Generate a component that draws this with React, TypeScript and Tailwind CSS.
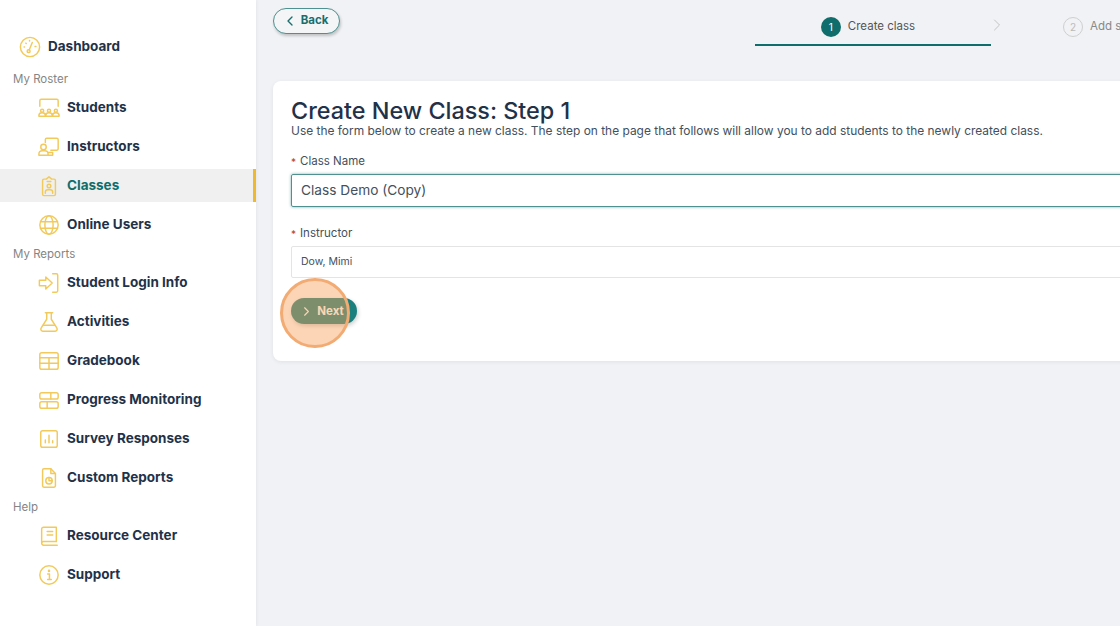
import React from "react";
import { ChevronLeft, ChevronRight } from "lucide-react";

const iconProps = {
  fill: "none",
  stroke: "#f2ca5c",
  strokeWidth: 1.6,
  strokeLinecap: "round" as const,
  strokeLinejoin: "round" as const,
  viewBox: "0 0 24 24",
  className: "w-[22px] h-[22px] shrink-0",
};

function DashboardIcon() {
  return (
    <svg {...iconProps}>
      <circle cx="12" cy="12" r="10.500" />
      <circle cx="10.500" cy="16.500" r="1.600" />
      <path d="M11.200 15l3.300-8M5.500 12h.5M7.500 7.800l.4.4M11.500 5v.5M17.500 11.500h1" />
    </svg>
  );
}
function StudentsIcon() {
  return (
    <svg {...iconProps}>
      <path d="M2 10V4a1.500 1.500 0 0 1 1.500-1.500h17A1.500 1.500 0 0 1 22 4v6" />
      <circle cx="4.500" cy="15" r="1.700" />
      <circle cx="12" cy="15" r="1.700" />
      <circle cx="19.500" cy="15" r="1.700" />
      <path d="M1 21v-1a3 2.500 0 0 1 7 0v1zM8.500 21v-1a3 2.500 0 0 1 7 0v1zM16 21v-1a3 2.500 0 0 1 7 0v1z" />
    </svg>
  );
}
function InstructorsIcon() {
  return (
    <svg {...iconProps}>
      <path d="M8 7V4a1.500 1.500 0 0 1 1.500-1.500h11A1.500 1.500 0 0 1 22 4v10a1.500 1.500 0 0 1-1.500 1.500H14" />
      <circle cx="6" cy="12" r="3" />
      <path d="M1 21v-1.500A3.500 3.500 0 0 1 4.500 16h3a3.500 3.500 0 0 1 3.500 3.500V21z" />
      <path d="M11 18h5v3h-5" />
    </svg>
  );
}
function ClassesIcon() {
  return (
    <svg {...iconProps}>
      <path d="M9 4.500L12 2l3 2.500h2.500A1.500 1.500 0 0 1 19 6v15a1.500 1.500 0 0 1-1.500 1.500h-11A1.500 1.500 0 0 1 5 21V6a1.500 1.500 0 0 1 1.500-1.500z" />
      <path d="M10 7h4" />
      <circle cx="12" cy="12" r="2" />
      <path d="M8 20v-1.500A2.500 2.500 0 0 1 10.500 16h3a2.500 2.500 0 0 1 2.500 2.500V20" />
    </svg>
  );
}
function GlobeIcon() {
  return (
    <svg {...iconProps}>
      <circle cx="12" cy="12" r="10" />
      <ellipse cx="12" cy="12" rx="4.500" ry="10" />
      <path d="M2.800 8.500h18.400M2.800 15.500h18.400" />
    </svg>
  );
}
function LoginIcon() {
  return (
    <svg {...iconProps}>
      <path d="M16 2h4a1.500 1.500 0 0 1 1.500 1.500v17A1.500 1.500 0 0 1 20 22h-4" />
      <path d="M1.500 9h7V5.500L15.500 12l-7 6.500V15h-7z" />
    </svg>
  );
}
function FlaskIcon() {
  return (
    <svg {...iconProps}>
      <path d="M8 2h8M9.500 2v7L3.500 18.500A2.200 2.200 0 0 0 5.500 22h13a2.200 2.200 0 0 0 2-3.500L14.500 9V2" />
      <path d="M6 15.500h12" />
    </svg>
  );
}
function TableIcon() {
  return (
    <svg {...iconProps}>
      <rect x="2" y="3" width="20" height="18" rx="2" />
      <path d="M2 8.500h20M2 14.500h20M12 8.500V21" />
    </svg>
  );
}
function ProgressIcon() {
  return (
    <svg {...iconProps}>
      <rect x="2" y="4" width="20" height="7" rx="2" />
      <rect x="2" y="14" width="20" height="7" rx="2" />
      <path d="M14 4v7M10 14v7" />
    </svg>
  );
}
function SurveyIcon() {
  return (
    <svg {...iconProps}>
      <rect x="3" y="3" width="18" height="18" rx="2" />
      <path d="M8 16v-3M12 16V8M16 16v-2" />
    </svg>
  );
}
function ReportIcon() {
  return (
    <svg {...iconProps}>
      <path d="M6.500 2H14l5 5v13.500a1.500 1.500 0 0 1-1.500 1.500h-11A1.500 1.500 0 0 1 5 20.500v-17A1.500 1.500 0 0 1 6.500 2z" />
      <path d="M14 2v5h5" />
      <circle cx="12" cy="15" r="3.500" />
      <path d="M12 11.500V15h3.500" />
    </svg>
  );
}
function BookIcon() {
  return (
    <svg {...iconProps}>
      <path d="M20 18V2.500H6A2 2 0 0 0 4 4.500v15A2.200 2.200 0 0 0 6.200 22H21" />
      <path d="M4 19.500A1.800 1.800 0 0 1 6 18h14M10 7h6M10 11h6" />
    </svg>
  );
}
function InfoIcon() {
  return (
    <svg {...iconProps}>
      <circle cx="12" cy="12" r="10" />
      <path d="M10.500 11H12.500V17M10.500 17h4" />
      <circle cx="12" cy="7.500" r="0.600" />
    </svg>
  );
}

function NavItem({ icon, label, active }: { icon: React.ReactNode; label: string; active?: boolean }) {
  if (active) {
    return (
      <div className="h-[33px] my-[3px] flex items-center pl-[38px] gap-[7px] bg-[#f0f0f0] border-r-[3px] border-[#eeb82f]">
        {icon}
        <span className="text-[13.5px] font-bold text-[#0f6e6c]">{label}</span>
      </div>
    );
  }
  return (
    <div className="h-[39px] flex items-center pl-[38px] gap-[7px]">
      {icon}
      <span className="text-[13.5px] font-bold text-[#1f3249]">{label}</span>
    </div>
  );
}

function SectionLabel({ children }: { children: React.ReactNode }) {
  return <div className="h-[19px] flex items-center pl-[13px] pt-[2px] text-[11.5px] text-[#858585]">{children}</div>;
}

function Label({ children }: { children: React.ReactNode }) {
  return (
    <div className="flex items-center gap-[4px] text-[11.5px] text-[#44505c] h-[16px]">
      <span className="text-[#c0392b] text-[10px]">*</span>
      {children}
    </div>
  );
}

export default function App() {
  return (
    <div className="flex w-[1120px] h-[626px] overflow-hidden bg-[#f0f2f5] font-['Inter',sans-serif]">
      {/* Sidebar */}
      <aside className="w-[256px] shrink-0 bg-white pt-[27px] shadow-[1px_0_3px_rgba(0,0,0,0.05)]">
        <div className="h-[39px] flex items-center pl-[19px] gap-[7px] mb-[3px]">
          <DashboardIcon />
          <span className="text-[13.5px] font-bold text-[#1f3249]">Dashboard</span>
        </div>
        <SectionLabel>My Roster</SectionLabel>
        <NavItem icon={<StudentsIcon />} label="Students" />
        <NavItem icon={<InstructorsIcon />} label="Instructors" />
        <NavItem icon={<ClassesIcon />} label="Classes" active />
        <NavItem icon={<GlobeIcon />} label="Online Users" />
        <SectionLabel>My Reports</SectionLabel>
        <NavItem icon={<LoginIcon />} label="Student Login Info" />
        <NavItem icon={<FlaskIcon />} label="Activities" />
        <NavItem icon={<TableIcon />} label="Gradebook" />
        <NavItem icon={<ProgressIcon />} label="Progress Monitoring" />
        <NavItem icon={<SurveyIcon />} label="Survey Responses" />
        <NavItem icon={<ReportIcon />} label="Custom Reports" />
        <SectionLabel>Help</SectionLabel>
        <NavItem icon={<BookIcon />} label="Resource Center" />
        <NavItem icon={<InfoIcon />} label="Support" />
      </aside>

      {/* Main */}
      <main className="relative flex-1 min-w-0 overflow-hidden pl-[17px]">
        <div className="flex w-[1000px] h-[81px] items-start">
          <button className="mt-[8px] w-[67px] h-[26px] flex items-center justify-center gap-[3px] pr-[3px] rounded-full border border-[#4f9190] bg-[#f3f5f7] shadow-[1px_2px_3px_rgba(0,0,0,0.2)] text-[11.5px] font-bold text-[#1a6e6c]">
            <ChevronLeft className="w-[16px] h-[16px]" strokeWidth={2} />
            Back
          </button>
          <div className="ml-[415px] w-[236px] h-[46px] border-b-2 border-[#0f6e6c] flex items-center justify-center gap-[7px] pt-[10px] pr-[10px]">
            <span className="w-5 h-5 rounded-full bg-[#0f6e6c] text-white text-[10px] flex items-center justify-center">1</span>
            <span className="text-[11.5px] text-[#555]">Create class</span>
          </div>
          <ChevronRight className="ml-[-4px] mt-[15px] w-[20px] h-[20px] text-[#c4c4c4] shrink-0" strokeWidth={1.2} />
          <div className="ml-[56px] mt-[17px] flex items-center gap-[7px] shrink-0">
            <span className="w-5 h-5 rounded-full border border-[#cfcfcf] text-[#bbb] text-[10px] flex items-center justify-center">2</span>
            <span className="text-[11.5px] text-[#888]">Add students</span>
          </div>
        </div>

        <section className="w-[1000px] h-[280px] bg-white rounded-[8px] shadow-[0_1px_4px_rgba(0,0,0,0.07)] pt-[17px] px-[18px]">
          <h1 className="text-[23.4px] leading-[26px] font-medium text-[#1f3249]">Create New Class: Step 1</h1>
          <p className="text-[11.95px] leading-[14px] text-[#44505c]">
            Use the form below to create a new class. The step on the page that follows will allow you to add students to the newly created class.
          </p>
          <div className="mt-[16px]">
            <Label>Class Name</Label>
          </div>
          <input
            readOnly
            value="Class Demo (Copy)"
            className="mt-[4px] block w-full h-[33px] px-[9px] pb-[2px] rounded-[2px] border border-[#4f9190] text-[13.7px] text-[#44505c] shadow-[0_0_3px_rgba(15,110,108,0.55)] outline-none"
          />
          <div className="mt-[19px]">
            <Label>Instructor</Label>
          </div>
          <div className="mt-[4px] h-[32px] px-[9px] flex items-center rounded-[2px] border border-[#e4e4e4] text-[10.5px] text-[#44505c]">
            Dow, Mimi
          </div>
          <button className="mt-[20px] w-[66px] h-[26px] flex items-center justify-center gap-[3px] pr-[5px] pt-[1px] rounded-full bg-[#1b7f7d] shadow-[1px_2px_4px_rgba(0,0,0,0.2)] text-[11.5px] font-bold text-white">
            <ChevronRight className="w-[15px] h-[15px]" strokeWidth={1.8} />
            Next
          </button>
        </section>

        {/* Click highlight over the Next button */}
        <div className="absolute left-[24px] top-[278px] w-[70px] h-[70px] rounded-full bg-[#f6a15a]/45 border-[3px] border-[#f2ab72]" />
      </main>
    </div>
  );
}
